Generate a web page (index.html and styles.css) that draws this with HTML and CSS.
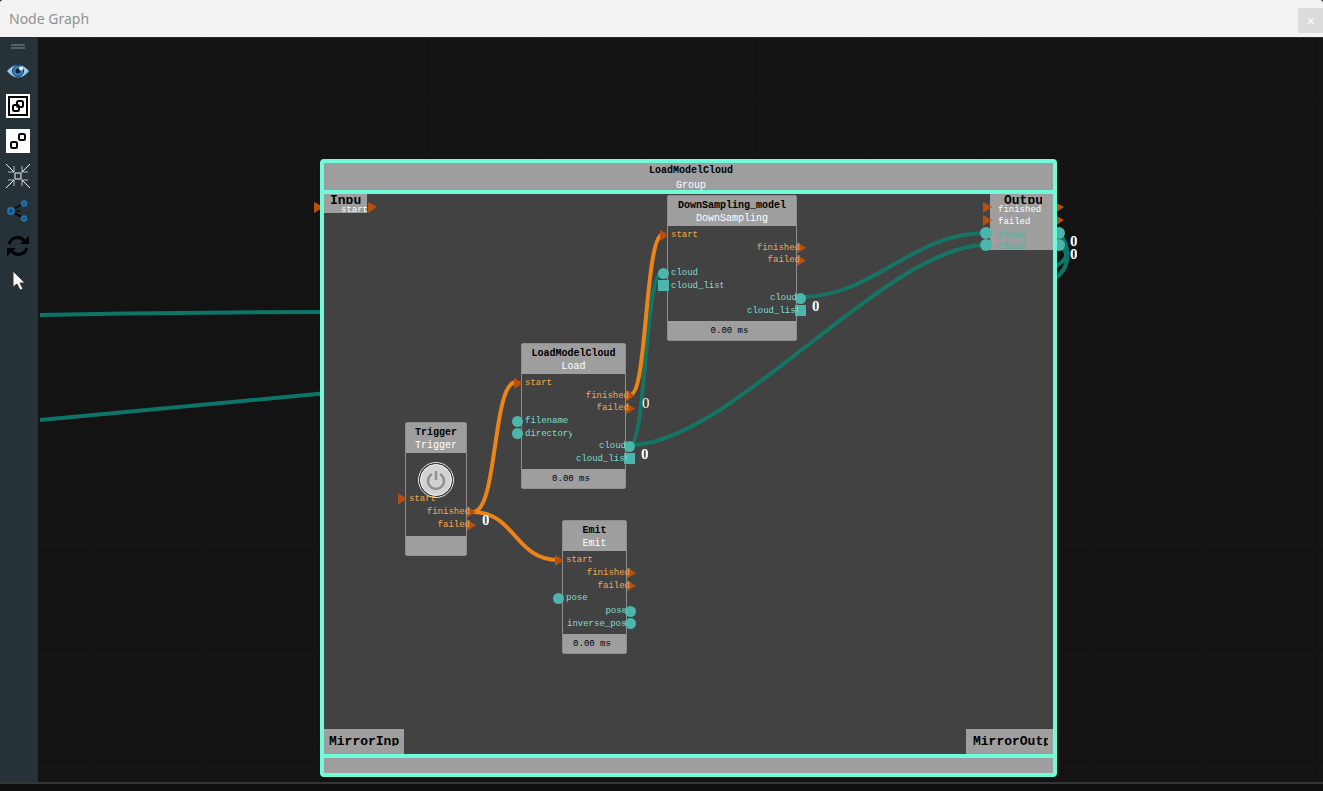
FILE: index.html
```html
<!DOCTYPE html>
<html lang="en">
<head>
<meta charset="utf-8">
<title>Node Graph</title>
<link rel="stylesheet" href="styles.css">
</head>
<body>
<header class="titlebar">
  <h1>Node Graph</h1>
  <button class="close" aria-label="Close"><svg width="8" height="8" viewBox="0 0 8 8"><path d="M1 1l6 6M7 1l-6 6" stroke="#f6f6f6" stroke-width="1.5"/></svg></button>
</header>
<main class="workspace">
  <nav class="toolbar" aria-label="Graph tools">
    <span class="grip"></span>
    <button aria-label="View"><svg viewBox="0 0 24 24"><path d="M0.500 12Q6 5.500 12 5.500T23.500 12Q18 19 12 19T0.500 12z" fill="#9cc8ec" stroke="#17364e"/><circle cx="12" cy="12" r="5.500" fill="#3f7fb5" stroke="#153a5a"/><circle cx="12" cy="12" r="2.500" fill="#10293f"/><circle cx="15" cy="9.500" r="2" fill="#fff"/></svg></button>
    <button aria-label="Group nodes"><svg viewBox="0 0 24 24"><path d="M0 0h24v24H0z" fill="#fff"/><g fill="none" stroke="#050505" stroke-width="2"><path d="M3 3h18v18H3z"/><rect x="7" y="11" width="6" height="6" rx="1.500"/><rect x="11" y="7" width="6" height="6" rx="1.500"/></g></svg></button>
    <button aria-label="Ungroup nodes"><svg viewBox="0 0 24 24"><path d="M0 0h24v24H0z" fill="#fff"/><g fill="none" stroke="#050505" stroke-width="2"><rect x="5" y="13" width="6" height="6" rx="1.500"/><rect x="13" y="5" width="6" height="6" rx="1.500"/></g></svg></button>
    <button aria-label="Fit to view"><svg viewBox="0 0 24 24" fill="none"><path d="M8 2v6H2M16 2v6h6M8 22v-6H2M16 22v-6h6" stroke="#829097" stroke-width="1.500"/><path d="M0 0l8 8M24 0l-8 8M0 24l8-8M24 24l-8-8M9 9h6v6H9z" stroke="#f4f4f4"/></svg></button>
    <button aria-label="Connections"><svg viewBox="0 0 24 24" fill="none"><path d="M8 10l8-5M8 14l8 4M9 12h5" stroke="#080b0d" stroke-width="2"/><path d="M10 11v2M12 11v2" stroke="#263238"/><g stroke="#1f74ae" stroke-width="2" fill="#164b73"><circle cx="5" cy="12" r="3"/><circle cx="18" cy="4.500" r="2.200"/><circle cx="18" cy="19.500" r="2.200"/></g></svg></button>
    <button aria-label="Refresh"><svg viewBox="0 0 24 24"><path d="M3 10Q5 3.500 12 3.500Q16 3.500 18 7M21 14Q19 20.500 12 20.500Q8 20.500 6 17" fill="none" stroke="#020304" stroke-width="3"/><path d="M23 2v8h-9zM1 22v-8h9z" fill="#020304"/></svg></button>
    <button aria-label="Select"><svg viewBox="0 0 24 24"><path d="M7 2v16l4-3 3 6 3-1-3-6h5z" fill="#f8f8f8" stroke="#39352e"/></svg></button>
  </nav>

  <section class="canvas" aria-label="Graph canvas">
    <svg class="wires" fill="none" stroke="#0b7567" stroke-width="4">
      <g stroke="#171717" stroke-width="1"><path d="M54.500 0v760M165.500 0v760M276.500 0v760M387.500 0v760M498.500 0v760M609.500 0v760M720.500 0v760M831.500 0v760M942.500 0v760M1053.500 0v760M1164.500 0v760M1275.500 0v760M0 61.500h1400M0 172.500h1400M0 283.500h1400M0 395.500h1400M0 506.500h1400M0 617.500h1400M0 729.500h1400"/></g>
      <path d="M2 277C110 275 190 274 290 274M2 382C90 374 190 365 290 355"/>
      <path d="M1021 195C1032 207 1034 230 1016 241M1021 207C1032 215 1030 222 1016 229"/>
      <g fill="#4db6ac" stroke="none"><circle cx="1021" cy="195" r="6"/><circle cx="1021" cy="207" r="6"/></g>
      <g fill="#b8500c" stroke="none"><path d="M276 164l10 5-10 6zM1017 164l9 5-9 6zM1017 177l9 5-9 6z"/></g>
    </svg>

    <section class="group">
      <header><strong>LoadModelCloud</strong><span>Group</span></header>
      <div class="group-body"></div>
      <footer></footer>
    </section>

    <div class="proxy input"><strong>Input</strong><span class="p1">start</span></div>
    <div class="proxy output"><strong>Output</strong><span class="p1">finished</span><span class="p2">failed</span><span class="p3">cloud</span><span class="p4">cloud</span></div>
    <div class="mirror mirror-in"><strong>MirrorInput</strong></div>
    <div class="mirror mirror-out"><strong>MirrorOutput</strong></div>

    <svg class="wires" fill="none" stroke="#147565" stroke-width="4">
      <path d="M592 407C608 407 607 234 624 234M762 259C837 259 873 195 948 195M592 407C692 407 848 207 948 207"/>
      <path d="M435 474C460 474 454 344 478 344M435 474C477 474 477 522 520 522M593 356C609 356 607 196 625 196" stroke="#ec8418"/>
      <g fill="#4db6ac" stroke="none"><circle cx="948" cy="195" r="6"/><circle cx="948" cy="207" r="6"/></g>
      <g fill="#b8500c" stroke="none"><path d="M330 164l9 5-9 6zM945 164l9 5-9 6zM945 177l9 5-9 6z"/></g>
    </svg>

    <article class="node downsampling">
      <header><strong>DownSampling_model</strong><span>DownSampling</span></header>
      <div class="ports">
        <div class="port in exec"><i></i><span>start</span></div>
        <div class="port out exec"><i></i><span>finished</span></div>
        <div class="port out exec"><i></i><span>failed</span></div>
        <div class="port in data"><i></i><span>cloud</span></div>
        <div class="port in list"><i></i><span>cloud_list</span></div>
        <div class="port out data"><i></i><span>cloud</span></div>
        <div class="port out list"><i></i><span>cloud_list</span></div>
      </div>
      <footer>0.00 ms</footer>
    </article>

    <article class="node load">
      <header><strong>LoadModelCloud</strong><span>Load</span></header>
      <div class="ports">
        <div class="port in exec"><i></i><span>start</span></div>
        <div class="port out exec"><i></i><span>finished</span></div>
        <div class="port out exec"><i></i><span>failed</span></div>
        <div class="port in data"><i></i><span>filename</span></div>
        <div class="port in data"><i></i><span>directory</span></div>
        <div class="port out data"><i></i><span>cloud</span></div>
        <div class="port out list"><i></i><span>cloud_list</span></div>
      </div>
      <footer>0.00 ms</footer>
    </article>

    <article class="node trigger">
      <header><strong>Trigger</strong><span>Trigger</span></header>
      <button class="power" aria-label="Trigger"><svg viewBox="0 0 38 38"><circle cx="19" cy="19" r="17.500" fill="#2c2c2c" stroke="#ececec"/><circle cx="19" cy="19" r="15.500" fill="#d2d2d2" stroke="#f5f5f5"/><path d="M15 13a8 8 0 1 0 8 0M19 10v9" fill="none" stroke="#929292" stroke-width="2.500"/></svg></button>
      <div class="ports">
        <div class="port in exec"><i></i><span>start</span></div>
        <div class="port out exec"><i></i><span>finished</span></div>
        <div class="port out exec"><i></i><span>failed</span></div>
      </div>
      <footer></footer>
    </article>

    <article class="node emit">
      <header><strong>Emit</strong><span>Emit</span></header>
      <div class="ports">
        <div class="port in exec"><i></i><span>start</span></div>
        <div class="port out exec"><i></i><span>finished</span></div>
        <div class="port out exec"><i></i><span>failed</span></div>
        <div class="port in data"><i></i><span>pose</span></div>
        <div class="port out data"><i></i><span>pose</span></div>
        <div class="port out data"><i></i><span>inverse_pose</span></div>
      </div>
      <footer>0.00 ms</footer>
    </article>

    <b class="count c1">0</b>
    <b class="count c2">0</b>
    <b class="count c3">0</b>
    <b class="count c4">0</b>
    <b class="count c5">0</b>
    <b class="count c6">0</b>
  </section>
</main>
<div class="statusbar"></div>
</body>
</html>
```

FILE: styles.css
```css
* { box-sizing: border-box; }
body {
  margin: 0;
  height: 100vh;
  display: flex;
  flex-direction: column;
  overflow: hidden;
  background: #111;
  font-family: "Liberation Mono", monospace;
}
button { border: 0; padding: 0; background: none; display: block; }
button svg { display: block; }

.titlebar {
  height: 38px;
  flex: none;
  display: flex;
  align-items: center;
  justify-content: space-between;
  padding-left: 9px;
  background: #f3f3f3;
  border-bottom: 1px solid #2b2b2b;
  border-radius: 3px 3px 0 0;
}
.titlebar h1 {
  margin: 0;
  font: 400 14px/20px "Noto Sans", sans-serif;
  color: #919191;
}
.close {
  width: 25px;
  height: 25px;
  margin-top: 4px;
  display: grid;
  place-items: center;
  background: #dbdbdb;
}

.workspace { flex: 1; min-height: 0; display: flex; }
.toolbar {
  width: 38px;
  flex: none;
  display: flex;
  flex-direction: column;
  gap: 11px;
  padding: 6px 0 0 6px;
  background: #263238;
}
.toolbar button, .toolbar button svg { width: 24px; height: 24px; }
.grip {
  width: 14px;
  height: 5px;
  margin: 0 0 -1px 5px;
  border: solid #566166;
  border-width: 2px 0;
}
.statusbar { height: 9px; flex: none; border-top: 2px solid #333536; background: #101010; }

.canvas { position: relative; flex: 1; overflow: hidden; background: #131313; }
.wires { position: absolute; inset: 0; width: 100%; height: 100%; }

.group {
  position: absolute;
  left: 282px;
  top: 121px;
  width: 737px;
  height: 618px;
  display: flex;
  flex-direction: column;
  border: 4px solid #6ffad8;
  border-radius: 4px;
  background: #424242;
}
.group header { height: 31px; padding: 1px 0 0 5px; background: #9e9e9e; border-bottom: 4px solid #6ffad8; }
.group-body { flex: 1; }
.group footer { height: 19px; background: #9e9e9e; border-top: 4px solid #6ffad8; }

header strong, header span { display: block; text-align: center; white-space: nowrap; }
header strong { font-size: 10px; line-height: 14px; color: #000; }
header span { font-size: 10px; line-height: 12px; color: #fff; }
.group header span { line-height: 15px; }

.node {
  position: absolute;
  display: flex;
  flex-direction: column;
  border: 1px solid #8e8e8e;
  border-radius: 2px;
  background: #424242;
}
.node header { height: 30px; padding-top: 3px; background: #9e9e9e; }
.node footer {
  height: 19px;
  margin-top: 4px;
  padding-right: 5px;
  background: #9e9e9e;
  color: #000;
  font-size: 9px;
  line-height: 20px;
  text-align: center;
}
.ports { flex: 1; display: flex; flex-direction: column; padding-top: 3px; }
.port {
  position: relative;
  flex: 1;
  display: flex;
  align-items: center;
  font-size: 9px;
  line-height: 12px;
  color: #80dfd2;
}
.port span { position: relative; overflow: hidden; white-space: nowrap; margin-left: 3px; }
.out { justify-content: flex-end; }
.out span { margin: 0 -1px 0 0; }
.out.exec span { margin-right: -4px; }
.out.list span { margin-right: -2px; width: 51px; }
.exec { color: #f2a950; }
.port i { position: absolute; left: -10px; width: 11px; height: 11px; background: #4db6ac; }
.out i { left: auto; right: -10px; }
.data i { border-radius: 50%; }
.exec i { left: -8px; width: 9px; background: #b8500c; clip-path: polygon(0 0, 100% 50%, 0 100%); }
.out.exec i { left: auto; right: -10px; }

.downsampling { left: 629px; top: 157px; width: 130px; height: 146px; }
.in.list span { width: 52px; }
.load { left: 483px; top: 305px; width: 105px; height: 146px; }
.load .in span { max-width: 47px; }
.trigger { left: 367px; top: 384px; width: 62px; height: 134px; }
.trigger .ports { padding-top: 0; }
.power { width: 38px; height: 38px; margin: 8px auto -7px; }
.power svg { width: 38px; height: 38px; }
.emit { left: 524px; top: 482px; width: 65px; height: 134px; }
.emit .out.data span { max-width: 60px; }

.proxy { position: absolute; top: 156px; background: #9e9e9e; color: #fff; font-size: 9px; }
.proxy strong, .mirror strong {
  display: block;
  overflow: hidden;
  color: #000;
  font-size: 13px;
}
.proxy strong { height: 10px; line-height: 14px; }
.proxy span { display: block; height: 12px; line-height: 12px; overflow: hidden; }
.input { left: 286px; width: 43px; height: 19px; }
.input strong { margin-left: 6px; width: 31px; }
.input span { margin-left: 17px; width: 28px; }
.output { left: 952px; width: 63px; height: 56px; }
.output strong { margin-left: 14px; width: 38px; }
.output span { margin-left: 8px; }
.output .p3, .output .p4 { padding-top: 1px; color: #42b5a5; }
.mirror { position: absolute; top: 691px; height: 25px; background: #9e9e9e; padding-top: 5px; }
.mirror strong { height: 12px; line-height: 16px; width: 70px; }
.mirror-in { left: 286px; width: 80px; padding-left: 5px; }
.mirror-out { left: 928px; width: 87px; padding-left: 7px; }
.mirror-out strong { width: 75px; }

.count {
  position: absolute;
  width: 7px;
  overflow: hidden;
  color: #fff;
  font: 700 15px/15px "Liberation Serif", serif;
}
.c1 { left: 774px; top: 261px; }
.c2 { left: 604px; top: 358px; font-weight: 400; }
.c3 { left: 603px; top: 409px; }
.c4 { left: 444px; top: 475px; }
.c5 { left: 1032px; top: 196px; }
.c6 { left: 1032px; top: 209px; }
```
